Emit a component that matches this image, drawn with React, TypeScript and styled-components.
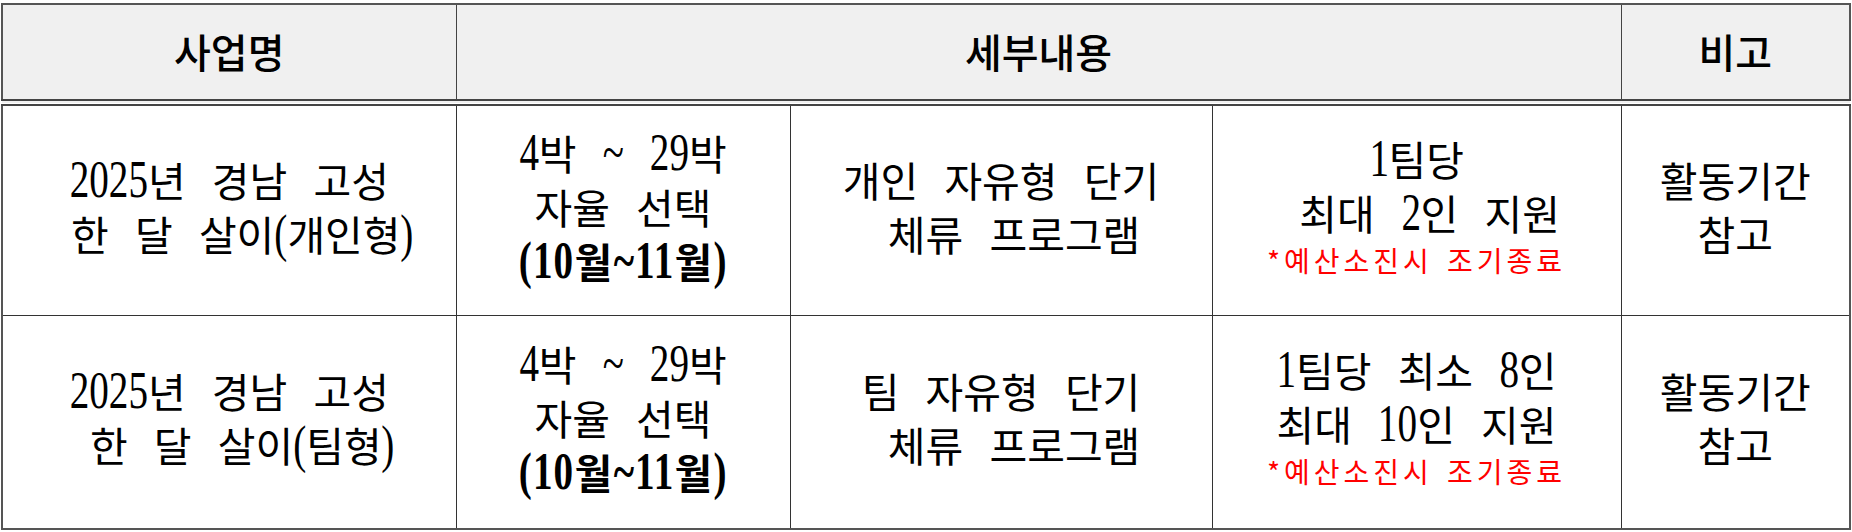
import React from "react";
import styled, { createGlobalStyle } from "styled-components";

const Global = createGlobalStyle`
  html, body { margin: 0; padding: 0; background: #ffffff; }
  body { font-family: "Noto Sans CJK KR", "Noto Sans", sans-serif; color: #000; }
`;

const Page = styled.div`
  width: 1852px;
  height: 532px;
  padding: 3px 0 0 1px;
  box-sizing: border-box;
  overflow: hidden;
`;

const Table = styled.table`
  width: 1848px;
  border-collapse: collapse;
  table-layout: fixed;
  border: 2px solid #555;
`;

const Col = styled.col<{ $w: number }>`
  width: ${(p) => p.$w}px;
`;

const HeadCell = styled.th`
  height: 92px;
  padding: 0 0 2px;
  background: #f0f0f0;
  border: 1px solid #444;
  border-bottom: 7px double #444;
  font-family: "Noto Sans CJK KR", sans-serif;
  font-size: 40px;
  font-weight: 500;
  line-height: 1;
  text-align: center;
  vertical-align: middle;
`;

const Cell = styled.td<{ $h: number }>`
  height: ${(p) => p.$h}px;
  padding: 0 0 10px;
  border: 1px solid #333;
  text-align: center;
  vertical-align: middle;
  font-family: "Noto Sans CJK KR", sans-serif;
  font-size: 41px;
  font-weight: 400;
  word-spacing: 17px;
`;

const Line = styled.div<{ $bold?: boolean }>`
  display: block;
  line-height: 54px;
  height: 54px;
  white-space: pre;
  font-weight: ${(p) => (p.$bold ? 700 : 400)};
  letter-spacing: ${(p) => (p.$bold ? "1.5px" : "0")};
`;

const Note = styled.div`
  display: block;
  line-height: 42px;
  height: 42px;
  white-space: pre;
  color: #ff0000;
  font-family: "Noto Sans CJK KR", sans-serif;
  font-size: 28px;
  letter-spacing: 4px;
  word-spacing: 4px;
`;

const Num = styled.span<{ $w: number }>`
  display: inline-block;
  font-family: "Liberation Serif", serif;
  font-size: 1.29em;
  line-height: 1;
  transform: scaleX(0.74);
  margin: 0 ${(p) => -p.$w * 0.13}em;
  word-spacing: 0;
`;

const charW = (c: string) => {
  if (c === "(" || c === ")") return 0.333;
  if (c === "~") return 0.541;
  return 0.5;
};

const Mixed: React.FC<{ text: string }> = ({ text }) => {
  const parts = text.split(/([0-9()~]+)/);
  return (
    <>
      {parts.map((p, i) =>
        i % 2 === 1 ? (
          <Num key={i} $w={p.split("").reduce((s, c) => s + charW(c), 0)}>
            {p}
          </Num>
        ) : (
          <React.Fragment key={i}>{p}</React.Fragment>
        )
      )}
    </>
  );
};

type RowData = {
  name: string[];
  stay: string[];
  program: string[];
  support: string[];
  note: string;
  remark: string[];
};

const rows: RowData[] = [
  {
    name: ["2025년 경남 고성", " 한 달 살이(개인형)"],
    stay: ["4박 ~ 29박", "자율 선택", "(10월~11월)"],
    program: ["개인 자유형 단기", " 체류 프로그램"],
    support: ["1팀당", " 최대 2인 지원"],
    note: "*예산소진시 조기종료",
    remark: ["활동기간", "참고"],
  },
  {
    name: ["2025년 경남 고성", " 한 달 살이(팀형)"],
    stay: ["4박 ~ 29박", "자율 선택", "(10월~11월)"],
    program: ["팀 자유형 단기", " 체류 프로그램"],
    support: ["1팀당 최소 8인", "최대 10인 지원"],
    note: "*예산소진시 조기종료",
    remark: ["활동기간", "참고"],
  },
];

const Lines: React.FC<{ lines: string[]; boldLast?: boolean }> = ({ lines, boldLast }) => (
  <>
    {lines.map((l, i) => (
      <Line key={i} $bold={boldLast && i === lines.length - 1}>
        <Mixed text={l} />
      </Line>
    ))}
  </>
);

export default function App() {
  return (
    <Page>
      <Global />
      <Table>
        <colgroup>
          <Col $w={454} />
          <Col $w={334} />
          <Col $w={422} />
          <Col $w={409} />
          <Col $w={229} />
        </colgroup>
        <thead>
          <tr>
            <HeadCell>사업명</HeadCell>
            <HeadCell colSpan={3}>세부내용</HeadCell>
            <HeadCell>비고</HeadCell>
          </tr>
        </thead>
        <tbody>
          {rows.map((r, i) => (
            <tr key={i}>
              <Cell $h={i === 0 ? 199 : 202}>
                <Lines lines={r.name} />
              </Cell>
              <Cell $h={i === 0 ? 199 : 202}>
                <Lines lines={r.stay} boldLast />
              </Cell>
              <Cell $h={i === 0 ? 199 : 202}>
                <Lines lines={r.program} />
              </Cell>
              <Cell $h={i === 0 ? 199 : 202}>
                <Lines lines={r.support} />
                <Note>{r.note}</Note>
              </Cell>
              <Cell $h={i === 0 ? 199 : 202}>
                <Lines lines={r.remark} />
              </Cell>
            </tr>
          ))}
        </tbody>
      </Table>
    </Page>
  );
}
